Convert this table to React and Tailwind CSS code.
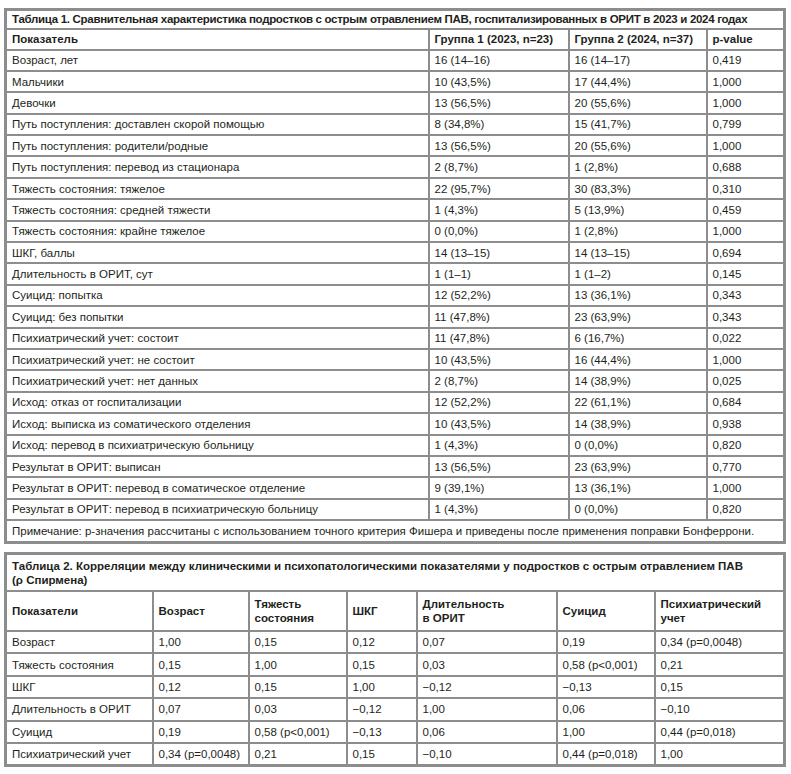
import React from 'react';

const rows1 = [
    ['Возраст, лет', '16 (14–16)', '16 (14–17)', '0,419'],
    ['Мальчики', '10 (43,5%)', '17 (44,4%)', '1,000'],
    ['Девочки', '13 (56,5%)', '20 (55,6%)', '1,000'],
    ['Путь поступления: доставлен скорой помощью', '8 (34,8%)', '15 (41,7%)', '0,799'],
    ['Путь поступления: родители/родные', '13 (56,5%)', '20 (55,6%)', '1,000'],
    ['Путь поступления: перевод из стационара', '2 (8,7%)', '1 (2,8%)', '0,688'],
    ['Тяжесть состояния: тяжелое', '22 (95,7%)', '30 (83,3%)', '0,310'],
    ['Тяжесть состояния: средней тяжести', '1 (4,3%)', '5 (13,9%)', '0,459'],
    ['Тяжесть состояния: крайне тяжелое', '0 (0,0%)', '1 (2,8%)', '1,000'],
    ['ШКГ, баллы', '14 (13–15)', '14 (13–15)', '0,694'],
    ['Длительность в ОРИТ, сут', '1 (1–1)', '1 (1–2)', '0,145'],
    ['Суицид: попытка', '12 (52,2%)', '13 (36,1%)', '0,343'],
    ['Суицид: без попытки', '11 (47,8%)', '23 (63,9%)', '0,343'],
    ['Психиатрический учет: состоит', '11 (47,8%)', '6 (16,7%)', '0,022'],
    ['Психиатрический учет: не состоит', '10 (43,5%)', '16 (44,4%)', '1,000'],
    ['Психиатрический учет: нет данных', '2 (8,7%)', '14 (38,9%)', '0,025'],
    ['Исход: отказ от госпитализации', '12 (52,2%)', '22 (61,1%)', '0,684'],
    ['Исход: выписка из соматического отделения', '10 (43,5%)', '14 (38,9%)', '0,938'],
    ['Исход: перевод в психиатрическую больницу', '1 (4,3%)', '0 (0,0%)', '0,820'],
    ['Результат в ОРИТ: выписан', '13 (56,5%)', '23 (63,9%)', '0,770'],
    ['Результат в ОРИТ: перевод в соматическое отделение', '9 (39,1%)', '13 (36,1%)', '1,000'],
    ['Результат в ОРИТ: перевод в психиатрическую больницу', '1 (4,3%)', '0 (0,0%)', '0,820'],
];

const rows2 = [
    ['Возраст', '1,00', '0,15', '0,12', '0,07', '0,19', '0,34 (p=0,0048)'],
    ['Тяжесть состояния', '0,15', '1,00', '0,15', '0,03', '0,58 (p<0,001)', '0,21'],
    ['ШКГ', '0,12', '0,15', '1,00', '−0,12', '−0,13', '0,15'],
    ['Длительность в ОРИТ', '0,07', '0,03', '−0,12', '1,00', '0,06', '−0,10'],
    ['Суицид', '0,19', '0,58 (p<0,001)', '−0,13', '0,06', '1,00', '0,44 (p=0,018)'],
    ['Психиатрический учет', '0,34 (p=0,0048)', '0,21', '0,15', '−0,10', '0,44 (p=0,018)', '1,00'],
];

const cell = 'border-2 border-[#8d8d8d] px-[5px] py-0 text-left align-middle';

const App = () => {
    return (
        <div
            className="w-[791px] h-[774px] bg-white pt-[8px] pl-[4px] text-[#231f20] text-[11.5px] leading-[14px]"
            style={{ fontFamily: '"Liberation Sans", Arial, sans-serif' }}
        >
            <table className="table-fixed border-collapse border-[3px] border-[#8d8d8d] w-[782px]">
                <colgroup>
                    <col className="w-[423px]" />
                    <col className="w-[140px]" />
                    <col className="w-[138px]" />
                    <col />
                </colgroup>
                <tbody>
                    <tr className="h-[19px] font-bold">
                        <td colSpan={4} className={cell + ' whitespace-nowrap tracking-[-0.3px]'}>
                            Таблица 1. Сравнительная характеристика подростков с острым отравлением ПАВ, госпитализированных в ОРИТ в 2023 и 2024 годах
                        </td>
                    </tr>
                    <tr className="h-[21px] font-bold">
                        <td className={cell}>Показатель</td>
                        <td className={cell}>Группа 1 (2023, n=23)</td>
                        <td className={cell}>Группа 2 (2024, n=37)</td>
                        <td className={cell}>p-value</td>
                    </tr>
                    {rows1.map((r) => (
                        <tr key={r[0]} className="h-[21.4px]">
                            {r.map((c, i) => (
                                <td key={i} className={cell}>{c}</td>
                            ))}
                        </tr>
                    ))}
                    <tr className="h-[22px]">
                        <td colSpan={4} className={cell}>
                            Примечание: р-значения рассчитаны с использованием точного критерия Фишера и приведены после применения поправки Бонферрони.
                        </td>
                    </tr>
                </tbody>
            </table>

            <table className="mt-[8px] table-fixed border-collapse border-[3px] border-[#8d8d8d] w-[782px]">
                <colgroup>
                    <col className="w-[147px]" />
                    <col className="w-[96px]" />
                    <col className="w-[98px]" />
                    <col className="w-[70px]" />
                    <col className="w-[140px]" />
                    <col className="w-[98px]" />
                    <col />
                </colgroup>
                <tbody>
                    <tr className="h-[38px] font-bold">
                        <td colSpan={7} className={cell + ' align-top pt-[4px]'}>
                            Таблица 2. Корреляции между клиническими и психопатологическими показателями у подростков с острым отравлением ПАВ
                            <br />
                            (ρ Спирмена)
                        </td>
                    </tr>
                    <tr className="h-[40px] font-bold">
                        <td className={cell}>Показатели</td>
                        <td className={cell}>Возраст</td>
                        <td className={cell}>
                            Тяжесть
                            <br />
                            состояния
                        </td>
                        <td className={cell}>ШКГ</td>
                        <td className={cell}>
                            Длительность
                            <br />
                            в ОРИТ
                        </td>
                        <td className={cell}>Суицид</td>
                        <td className={cell}>
                            Психиатрический
                            <br />
                            учет
                        </td>
                    </tr>
                    {rows2.map((r) => (
                        <tr key={r[0]} className="h-[22.4px]">
                            {r.map((c, i) => (
                                <td key={i} className={cell}>{c}</td>
                            ))}
                        </tr>
                    ))}
                </tbody>
            </table>
        </div>
    );
};

export default App;
